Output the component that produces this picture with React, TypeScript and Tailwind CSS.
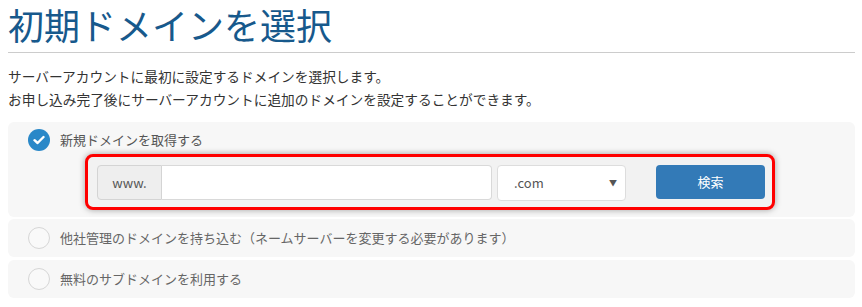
import React from 'react';

const font = { fontFamily: '"Noto Sans CJK JP", "Noto Sans", sans-serif' };

const Radio: React.FC<{ checked?: boolean }> = ({ checked }) =>
  checked ? (
    <span className="w-[22px] h-[22px] rounded-full bg-[#2a88c8] flex items-center justify-center shrink-0">
      <svg width="12" height="10" viewBox="0 0 12 10">
        <path d="M1.5 5.2 L4.6 8 L10.5 2" fill="none" stroke="#fff" strokeWidth="2.4" strokeLinecap="round" strokeLinejoin="round" />
      </svg>
    </span>
  ) : (
    <span className="w-[22px] h-[22px] rounded-full border border-[#d6d6d6] bg-[#f9f9f9] shrink-0" />
  );

export default function App() {
  return (
    <div className="w-[862px] h-[307px] bg-white px-2 overflow-hidden" style={font}>
      <h1 className="w-[847px] text-[36px] leading-[48px] text-[#17598c] font-normal border-b border-[#cccccc] pb-[4px]">
        初期ドメインを選択
      </h1>

      <p className="mt-[12px] text-[13.7px] leading-[23px] text-[#333]">
        サーバーアカウントに最初に設定するドメインを選択します。
        <br />
        お申し込み完了後にサーバーアカウントに追加のドメインを設定することができます。
      </p>

      <div className="mt-[11px] w-[847px] flex flex-col gap-[2px]">
        {/* new domain */}
        <div className="h-[95px] rounded-md bg-[#f7f7f7] pl-[20px] pt-[7px]">
          <div className="flex items-center gap-[10px] h-[22px]">
            <Radio checked />
            <span className="text-[13px] text-[#555]">新規ドメインを取得する</span>
          </div>
          <div className="ml-[57px] mt-[3px] w-[690px] h-[56px] border-[3px] border-[#ff0000] rounded-[8px] bg-[#f2f2f2] shadow-[0_0_6px_rgba(0,0,0,0.35)] pl-[9px] pt-[8px] flex items-start">
            <div className="flex h-[35px]">
              <span className="w-[65px] flex items-center justify-center bg-[#eeeeee] border border-[#d4d4d4] rounded-l-[4px] text-[13px] text-[#555]">
                www.
              </span>
              <input className="w-[330px] bg-white border border-l-0 border-[#d9d9d9] rounded-r-[4px] outline-none" />
            </div>
            <div className="ml-[5px] w-[129px] h-[36px] bg-white border border-[#dddddd] rounded-[4px] flex items-center justify-between pl-[16px] pr-[8px] text-[13px] text-[#555]">
              <span>.com</span>
              <span className="text-[8px] text-[#555]">▼</span>
            </div>
            <button className="ml-[30px] w-[109px] h-[34px] bg-[#337ab7] rounded-[4px] text-white text-[13px]">
              検索
            </button>
          </div>
        </div>

        {/* transfer */}
        <div className="h-[38px] rounded-md bg-[#f7f7f7] pl-[20px] flex items-center gap-[10px]">
          <Radio />
          <span className="text-[13px] text-[#666]">他社管理のドメインを持ち込む（ネームサーバーを変更する必要があります）</span>
        </div>

        {/* subdomain */}
        <div className="h-[38px] mt-[1px] rounded-md bg-[#f7f7f7] pl-[20px] flex items-center gap-[10px]">
          <Radio />
          <span className="text-[13px] text-[#666]">無料のサブドメインを利用する</span>
        </div>
      </div>
    </div>
  );
}
